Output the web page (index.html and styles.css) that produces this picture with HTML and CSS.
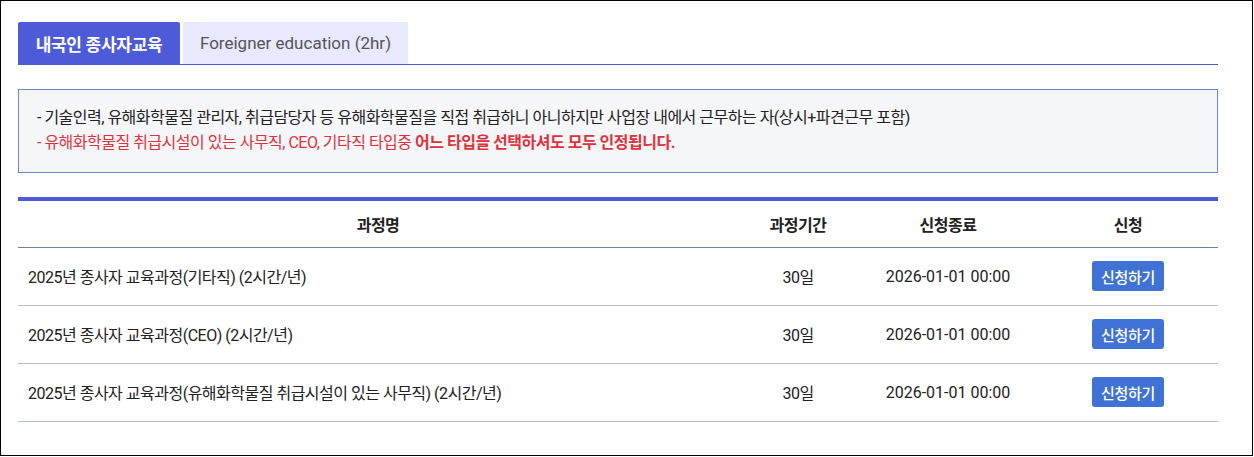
FILE: index.html
```html
<!DOCTYPE html>
<html lang="ko">
<head>
<meta charset="utf-8">
<title>종사자교육</title>
<link rel="stylesheet" href="styles.css">
</head>
<body>
<div class="frame">
  <div class="wrap">
    <div class="tabs">
      <div class="tab tab-active">내국인 종사자교육</div>
      <div class="tab tab-inactive">Foreigner education (2hr)</div>
    </div>
    <div class="notice">
      <p class="line">- 기술인력, 유해화학물질 관리자, 취급담당자 등 유해화학물질을 직접 취급하니 아니하지만 사업장 내에서 근무하는 자(상시+파견근무 포함)</p>
      <p class="line red">- 유해화학물질 취급시설이 있는 사무직, CEO, 기타직 타입중 <strong>어느 타입을 선택하셔도 모두 인정됩니다.</strong></p>
    </div>
    <table class="courses">
      <colgroup>
        <col class="c1"><col class="c2"><col class="c3"><col class="c4">
      </colgroup>
      <thead>
        <tr><th>과정명</th><th>과정기간</th><th>신청종료</th><th>신청</th></tr>
      </thead>
      <tbody>
        <tr><td class="name">2025년 종사자 교육과정(기타직) (2시간/년)</td><td>30일</td><td class="date">2026-01-01 00:00</td><td><button class="btn">신청하기</button></td></tr>
        <tr><td class="name">2025년 종사자 교육과정(CEO) (2시간/년)</td><td>30일</td><td class="date">2026-01-01 00:00</td><td><button class="btn">신청하기</button></td></tr>
        <tr><td class="name">2025년 종사자 교육과정(유해화학물질 취급시설이 있는 사무직) (2시간/년)</td><td>30일</td><td class="date">2026-01-01 00:00</td><td><button class="btn">신청하기</button></td></tr>
      </tbody>
    </table>
  </div>
</div>
</body>
</html>
```

FILE: styles.css
```css
* { box-sizing: border-box; }
html, body { margin: 0; padding: 0; background: #fff; }
body {
  font-family: Roboto, "Noto Sans CJK KR", sans-serif;
  color: #222;
  font-size: 16px;
  letter-spacing: -0.5px;
}
.frame {
  width: 1253px;
  height: 456px;
  border: 1px solid #000;
  padding: 21px 0 0 17px;
}
.wrap { width: 1200px; }
.tabs {
  display: flex;
  gap: 3px;
  border-bottom: 1px solid #4d5bd8;
  height: 43px;
}
.tab {
  height: 42px;
  display: flex;
  align-items: center;
  justify-content: center;
  border-radius: 2px 2px 0 0;
  font-size: 17px;
}
.tab-active {
  width: 162px;
  background: #4d5bd8;
  color: #fff;
  font-weight: 700;
  letter-spacing: -0.3px;
}
.tab-inactive {
  width: 225px;
  background: #e8e9fc;
  color: #555;
  letter-spacing: 0;
}
.notice {
  margin-top: 24px;
  background: #f5f6f8;
  border: 1px solid #6b89c4;
  padding: 15px 18px 17px;
}
.line {
  margin: 0;
  line-height: 25px;
  font-size: 16px;
  color: #222;
}
.line.red { color: #e0323c; }
.line.red strong { font-weight: 700; }
.courses {
  margin-top: 24px;
  width: 1200px;
  border-collapse: collapse;
  border-top: 4px solid #4d5bd8;
  table-layout: fixed;
}
.c1 { width: 720px; }
.c2 { width: 120px; }
.c3 { width: 180px; }
.c4 { width: 180px; }
.courses th {
  height: 48px;
  font-weight: 700;
  font-size: 16px;
  color: #222;
  text-align: center;
  border-bottom: 1px solid #6d7fa3;
  padding: 0;
}
.courses td {
  height: 58px;
  text-align: center;
  border-bottom: 1px solid #b3bfd6;
  padding: 0;
  font-size: 16px;
  color: #222;
}
.courses td.name { text-align: left; padding-left: 10px; }
.courses td.date { letter-spacing: 0; }
.btn {
  width: 72px;
  height: 30px;
  border: 0;
  border-radius: 3px;
  background: #3f72d4;
  color: #fff;
  font-family: inherit;
  font-size: 15px;
  letter-spacing: -0.3px;
  font-weight: 500;
  padding: 0;
  vertical-align: middle;
}
```
